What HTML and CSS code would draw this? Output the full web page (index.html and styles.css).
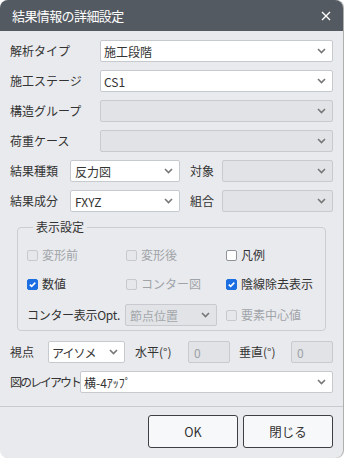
FILE: index.html
```html
<!DOCTYPE html>
<html lang="ja">
<head>
<meta charset="utf-8">
<link rel="stylesheet" href="styles.css">
</head>
<body>
<div class="dialog">
  <div class="header">
    <span class="title">結果情報の詳細設定</span>
    <svg class="close" width="10" height="10" viewBox="0 0 10 10"><path d="M1 1L9 9M9 1L1 9" stroke="#fff" stroke-width="1.4" fill="none"/></svg>
  </div>
  <div class="content">
    <div class="row">
      <span class="label w90">解析タイプ</span>
      <div class="select grow"><span>施工段階</span><svg class="chev" width="9" height="6" viewBox="0 0 9 6"><path d="M1 1L4.5 4.5L8 1" stroke="#777" stroke-width="1.6" fill="none"/></svg></div>
    </div>
    <div class="row">
      <span class="label w90">施工ステージ</span>
      <div class="select grow"><span>CS1</span><svg class="chev" width="9" height="6" viewBox="0 0 9 6"><path d="M1 1L4.5 4.5L8 1" stroke="#777" stroke-width="1.6" fill="none"/></svg></div>
    </div>
    <div class="row">
      <span class="label w90">構造グループ</span>
      <div class="select grow disabled"><span></span><svg class="chev" width="9" height="6" viewBox="0 0 9 6"><path d="M1 1L4.5 4.5L8 1" stroke="#777" stroke-width="1.6" fill="none"/></svg></div>
    </div>
    <div class="row">
      <span class="label w90">荷重ケース</span>
      <div class="select grow disabled"><span></span><svg class="chev" width="9" height="6" viewBox="0 0 9 6"><path d="M1 1L4.5 4.5L8 1" stroke="#777" stroke-width="1.6" fill="none"/></svg></div>
    </div>
    <div class="row">
      <span class="label w60">結果種類</span>
      <div class="select w110"><span>反力図</span><svg class="chev" width="9" height="6" viewBox="0 0 9 6"><path d="M1 1L4.5 4.5L8 1" stroke="#777" stroke-width="1.6" fill="none"/></svg></div>
      <span class="label w32 ml10">対象</span>
      <div class="select grow disabled"><span></span><svg class="chev" width="9" height="6" viewBox="0 0 9 6"><path d="M1 1L4.5 4.5L8 1" stroke="#777" stroke-width="1.6" fill="none"/></svg></div>
    </div>
    <div class="row">
      <span class="label w60">結果成分</span>
      <div class="select w110"><span>FXYZ</span><svg class="chev" width="9" height="6" viewBox="0 0 9 6"><path d="M1 1L4.5 4.5L8 1" stroke="#777" stroke-width="1.6" fill="none"/></svg></div>
      <span class="label w32 ml10">組合</span>
      <div class="select grow disabled"><span></span><svg class="chev" width="9" height="6" viewBox="0 0 9 6"><path d="M1 1L4.5 4.5L8 1" stroke="#777" stroke-width="1.6" fill="none"/></svg></div>
    </div>

    <fieldset class="group">
      <legend>表示設定</legend>
      <div class="grid">
        <label class="check off"><span class="box"></span>変形前</label>
        <label class="check off"><span class="box"></span>変形後</label>
        <label class="check"><span class="box white"></span>凡例</label>
        <label class="check"><span class="box on"><svg width="9" height="9" viewBox="0 0 9 9"><path d="M1.8 4.6L3.7 6.4L7.3 2.6" stroke="#fff" stroke-width="1.6" fill="none"/></svg></span>数値</label>
        <label class="check off"><span class="box"></span>コンター図</label>
        <label class="check"><span class="box on"><svg width="9" height="9" viewBox="0 0 9 9"><path d="M1.8 4.6L3.7 6.4L7.3 2.6" stroke="#fff" stroke-width="1.6" fill="none"/></svg></span>陰線除去表示</label>
        <span class="label contour">コンター表示Opt.</span>
        <div class="select disabled w92"><span class="dtext">節点位置</span><svg class="chev" width="9" height="6" viewBox="0 0 9 6"><path d="M1 1L4.5 4.5L8 1" stroke="#777" stroke-width="1.6" fill="none"/></svg></div>
        <label class="check off"><span class="box"></span>要素中心値</label>
      </div>
    </fieldset>

    <div class="row view">
      <span class="label w38">視点</span>
      <div class="select w77"><span class="kana">アイソメ</span><svg class="chev" width="9" height="6" viewBox="0 0 9 6"><path d="M1 1L4.5 4.5L8 1" stroke="#777" stroke-width="1.6" fill="none"/></svg></div>
      <span class="label w53 ml10">水平(°)</span>
      <div class="input disabled w42">0</div>
      <span class="label w52 ml9">垂直(°)</span>
      <div class="input disabled w42">0</div>
    </div>
    <div class="row">
      <span class="label w70 tight">図のレイアウト</span>
      <div class="select grow"><span>横-4ｱｯﾌﾟ</span><svg class="chev" width="9" height="6" viewBox="0 0 9 6"><path d="M1 1L4.5 4.5L8 1" stroke="#777" stroke-width="1.6" fill="none"/></svg></div>
    </div>
  </div>
  <div class="footer">
    <button class="btn">OK</button>
    <button class="btn">閉じる</button>
  </div>
</div>
</body>
</html>
```
FILE: styles.css
```css
* { box-sizing: border-box; }
html, body { margin: 0; padding: 0; background: #ffffff; }
body {
  font-family: "Noto Sans CJK JP", "Noto Sans", sans-serif;
  font-size: 12px;
  color: #333;
}
.dialog {
  width: 343px;
  height: 458px;
  background: #e9eaed;
  border-radius: 8px;
  overflow: hidden;
  display: flex;
  flex-direction: column;
  box-shadow: 1px 0 1px rgba(0,0,0,0.35);
}
.header {
  height: 31px;
  background: #545a61;
  display: flex;
  align-items: center;
  justify-content: space-between;
  padding: 0 12px 0 12px;
  color: #fff;
}
.title { font-size: 13px; letter-spacing: -0.6px; }
.close { display: block; margin-top: 1px; }
.content {
  padding: 9px 10px 0 10px;
  display: flex;
  flex-direction: column;
  gap: 8px;
  flex: 1;
}
.row {
  display: flex;
  align-items: center;
  height: 22px;
}
.label { flex: none; line-height: 16px; white-space: nowrap; }
.kana { letter-spacing: -1px; }
.tight { letter-spacing: -2px; }
.w90 { width: 90px; }
.w60 { width: 60px; }
.w32 { width: 32px; }
.w38 { width: 38px; }
.w53 { width: 53px; }
.w52 { width: 52px; }
.w70 { width: 70px; }
.ml10 { margin-left: 10px; }
.ml9 { margin-left: 9px; }
.select, .input {
  height: 22px;
  background: #fff;
  border: 1px solid #c6c9ce;
  border-radius: 2px;
  display: flex;
  align-items: center;
  justify-content: space-between;
  padding: 0 6px 0 3px;
  color: #333;
  flex: none;
}
.select.grow { flex: 1; }
.w110 { width: 110px; padding-left: 4px; }
.w77 { width: 77px; }
.w92 { width: 92px; }
.w42 { width: 42px; justify-content: flex-start; padding-left: 5px; }
.select.disabled, .input.disabled {
  background: #e1e3e6;
  border-color: #c8cacf;
}
.input.disabled { color: #9da1a6; }
.dtext { color: #a3a7ab; padding-left: 1px; }
.chev { display: block; }
.group {
  margin: 0 7px 0 7px;
  border: 1px solid #cacdd1;
  border-radius: 4px;
  padding: 14px 9px 4px 9px;
  min-width: 0;
}
.group legend {
  padding: 0 3px;
  margin-left: 6px;
  line-height: 14px;
}
.grid {
  display: grid;
  grid-template-columns: 99px 100px 1fr;
  row-gap: 15px;
  align-items: center;
}
.check {
  display: flex;
  align-items: center;
  gap: 4px;
  line-height: 14px;
  height: 14px;
  white-space: nowrap;
}
.check.off { color: #a0a4a9; }
.box {
  width: 11px;
  height: 11px;
  border: 1px solid #c6c9cd;
  background: #e6e7ea;
  border-radius: 2px;
  display: flex;
  align-items: center;
  justify-content: center;
  flex: none;
}
.box.white { background: #fff; border-color: #8f9398; }
.box.on { background: #1b6fe3; border-color: #1b6fe3; }
.box svg { display: block; }
.contour { margin-top: -2px; letter-spacing: -0.3px; }
.grid .select { margin-top: -2px; margin-left: -1px; }
.grid .check:last-child { margin-top: -2px; }
.view { margin-top: 2px; }
.footer {
  border-top: 1px solid #c8cbcf;
  height: 52px;
  display: flex;
  justify-content: flex-end;
  align-items: flex-start;
  gap: 5px;
  padding: 8px 10px 0 0;
  flex: none;
}
.btn {
  width: 90px;
  height: 33px;
  background: #f7f8fa;
  border: 1px solid #3c3f43;
  border-radius: 3px;
  font-family: "Noto Sans CJK JP", "Noto Sans", sans-serif;
  font-size: 12.5px;
  color: #333;
  padding: 0;
}
```
